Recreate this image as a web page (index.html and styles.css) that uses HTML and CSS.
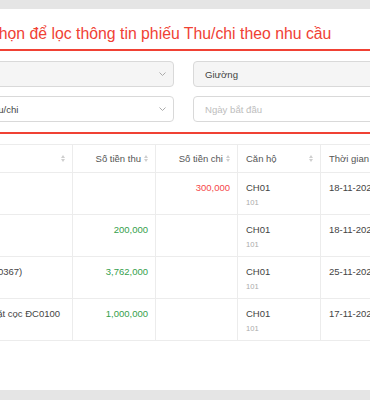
FILE: index.html
```html
<!DOCTYPE html>
<html lang="vi">
<head>
  <meta charset="UTF-8" />
  <meta name="viewport" content="width=device-width, initial-scale=1.0"/>
  <title>Thu/chi</title>
  <link rel="stylesheet" href="styles.css">
</head>
<body>

  <div class="page">
    <div class="card">
      <div class="card-head">
        <h2 class="card-title">Vui lòng chọn để lọc thông tin phiếu Thu/chi theo nhu cầu</h2>
      </div>

      <!-- Filters -->
      <div class="filters">
        <div class="select disabled">
          <span class="select-value"></span>
          <svg class="chevron" width="7" height="4" viewBox="0 0 7 4"><polyline points="0.5,0.5 3.5,3.5 6.5,0.5" /></svg>
        </div>
        <div class="select disabled">
          <span class="select-value">Giường</span>
        </div>
        <div class="select">
          <span class="select-value">Phiếu Thu/chi</span>
          <svg class="chevron" width="7" height="4" viewBox="0 0 7 4"><polyline points="0.5,0.5 3.5,3.5 6.5,0.5" /></svg>
        </div>
        <div class="select">
          <span class="select-value placeholder">Ngày bắt đầu</span>
        </div>
      </div>

      <!-- Table -->
      <table class="table">
        <colgroup>
          <col class="col-name">
          <col class="col-money">
          <col class="col-money-2">
          <col class="col-room">
          <col class="col-date">
        </colgroup>
        <thead>
          <tr>
            <th><div class="th-inner right"><span class="sorter"></span></div></th>
            <th><div class="th-inner right">Số tiền thu <span class="sorter"></span></div></th>
            <th><div class="th-inner right">Số tiền chi <span class="sorter"></span></div></th>
            <th><div class="th-inner between">Căn hộ <span class="sorter"></span></div></th>
            <th><div class="th-inner">Thời gian</div></th>
          </tr>
        </thead>
        <tbody>
          <tr>
            <td></td>
            <td class="num"></td>
            <td class="num out">300,000</td>
            <td><div class="room">CH01</div><div class="sub">101</div></td>
            <td>18-11-2023</td>
          </tr>
          <tr>
            <td></td>
            <td class="num in">200,000</td>
            <td class="num"></td>
            <td><div class="room">CH01</div><div class="sub">101</div></td>
            <td>18-11-2023</td>
          </tr>
          <tr>
            <td>Tiền (HĐ00367)</td>
            <td class="num in">3,762,000</td>
            <td class="num"></td>
            <td><div class="room">CH01</div><div class="sub">101</div></td>
            <td>25-11-2023</td>
          </tr>
          <tr>
            <td>Thu tiền đặt cọc ĐC0100</td>
            <td class="num in">1,000,000</td>
            <td class="num"></td>
            <td><div class="room">CH01</div><div class="sub">101</div></td>
            <td>17-11-2023</td>
          </tr>
        </tbody>
      </table>
    </div>
  </div>

</body>
</html>
```

FILE: styles.css
```css
:root {
  --red: #f04134;
  --line: #ececec;
  --text: #444;
}

* {
  box-sizing: border-box;
  font-family: 'Liberation Sans', Arial, sans-serif;
}

body {
  margin: 0;
  background: #e5e5e5;
  overflow: hidden;
}

.page {
  padding-top: 9px;
}

.card {
  margin-left: -80px;
  width: 640px;
  background: #fff;
  padding-bottom: 49px;
}

.card-head {
  padding: 13px 0 3px 10px;
  border-bottom: 2px solid var(--red);
}

.card-title {
  margin: 0;
  font-size: 15.8px;
  line-height: 24px;
  font-weight: normal;
  color: var(--red);
  white-space: nowrap;
}

.filters {
  display: grid;
  grid-template-columns: 226px 238px;
  column-gap: 19px;
  row-gap: 9px;
  padding: 10px 16px 10px 28px;
  border-bottom: 2px solid var(--red);
}

.select {
  height: 26px;
  padding: 0 7px 0 11px;
  border: 1px solid #d9d9d9;
  border-radius: 4px;
  display: flex;
  align-items: center;
  justify-content: space-between;
  font-size: 9.6px;
  color: var(--text);
  background: #fff;
}

.select.disabled {
  background: #f5f5f5;
}

.placeholder {
  color: #bdbdbd;
}

.chevron polyline {
  fill: none;
  stroke: #aaa;
  stroke-width: 1;
}

.table {
  margin: 10px 0 0 27px;
  border-collapse: separate;
  border-spacing: 0;
  table-layout: fixed;
  width: 514px;
  border-top: 1px solid var(--line);
  font-size: 9.5px;
  color: var(--text);
}

.col-name { width: 126px; }
.col-money { width: 83px; }
.col-money-2 { width: 82px; }
.col-room { width: 83px; }
.col-date { width: 140px; }

.table th,
.table td {
  border-bottom: 1px solid var(--line);
  border-right: 1px solid var(--line);
  white-space: nowrap;
  overflow: hidden;
}

.table th {
  padding: 6px 7px 6px 8px;
  line-height: 15px;
  font-weight: normal;
  text-align: left;
  color: #555;
}

.th-inner {
  display: flex;
  align-items: center;
  gap: 3px;
}

.th-inner.right {
  justify-content: flex-end;
}

.th-inner.between {
  justify-content: space-between;
}

.sorter {
  display: inline-flex;
  flex-direction: column;
  gap: 1px;
}

.sorter::before,
.sorter::after {
  content: "";
  border-left: 2.5px solid transparent;
  border-right: 2.5px solid transparent;
}

.sorter::before {
  border-bottom: 3px solid #cfcfcf;
}

.sorter::after {
  border-top: 3px solid #cfcfcf;
}

.table td {
  padding: 7px 7px 4px 8px;
  line-height: 16px;
  vertical-align: top;
  height: 42px;
}

.table td.num {
  text-align: right;
}

.num.out {
  color: #f5474a;
}

.num.in {
  color: #35a04b;
}

.sub {
  font-size: 7.6px;
  line-height: 13px;
  color: #aaa;
}
```
